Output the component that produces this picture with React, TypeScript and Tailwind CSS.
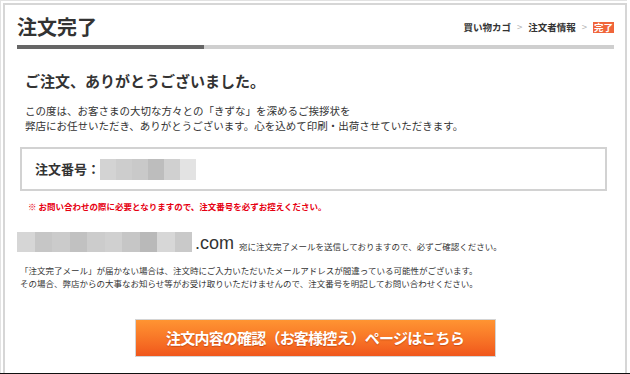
const jp = "font-['Noto_Sans_CJK_JP','Noto_Sans',sans-serif]"

// モザイク（ぼかし）部分の色
const orderBlur = ['#d3d3d3', '#cdcdcd', '#c9c9c9', '#bdbdbd', '#d0d0d0', '#e3e3e3']
const mailBlur = ['#d6d6d6', '#c6c6c6', '#cbcbcb', '#c1c1c1', '#cccccc', '#d0d0d0', '#c6c6c6', '#b9b9b9', '#d7d7d7', '#c9c9c9']

const Mosaic = ({ colors, cell, h }: { colors: string[]; cell: string; h: string }) => (
  <div className={`flex ${h}`}>
    {colors.map((c, i) => (
      <div key={i} className={cell} style={{ backgroundColor: c }} />
    ))}
  </div>
)

const Breadcrumb = () => (
  <div className={`flex items-center gap-[6px] text-[9.5px] font-bold text-[#333] ${jp}`}>
    <span>買い物カゴ</span>
    <span className="font-normal text-[#b5b5b5]">&gt;</span>
    <span>注文者情報</span>
    <span className="font-normal text-[#b5b5b5]">&gt;</span>
    <span className="bg-[#f0653a] px-[1px] leading-[11px] text-white">完了</span>
  </div>
)

export default function App() {
  return (
    <div className="flex h-[374px] w-[630px] border-b border-[#111] bg-white">
      <div className="h-full w-[627px] border-l border-t border-[#e2e2e2] pl-[2px] pt-[2px]">
        <div className={`h-full border-x-2 border-t-2 border-[#d6d6d6] ${jp} text-[#333]`}>
          {/* ヘッダー */}
          <div className="ml-[12px] mr-[11px] pt-[8px]">
            <div className="flex items-center justify-between">
              <h1 className="text-[20px] font-bold leading-[28px] text-[#333]">注文完了</h1>
              <Breadcrumb />
            </div>
            <div className="mt-[4px] flex h-[4px]">
              <div className="w-[187px] bg-[#666]" />
              <div className="flex-1 bg-[#cfcfcf]" />
            </div>
          </div>

          {/* 本文 */}
          <div className="pl-[20px]">
            <h2 className="mt-[22px] text-[15px] font-bold leading-[20px]">ご注文、ありがとうございました。</h2>
            <p className="mt-[12px] text-[10.5px] leading-[15px]">
              この度は、お客さまの大切な方々との「きずな」を深めるご挨拶状を
              <br />
              弊店にお任せいただき、ありがとうございます。心を込めて印刷・出荷させていただきます。
            </p>
          </div>

          <div className="ml-[15px] mt-[14px] flex h-[44px] w-[587px] items-center border-2 border-[#d2d2d2] pl-[13px]">
            <span className="text-[13px] font-bold">注文番号：</span>
            <Mosaic colors={orderBlur} cell="w-[16px]" h="h-[21px]" />
          </div>

          <p className="ml-[23px] mt-[9px] text-[8.5px] font-bold leading-[12px] text-[#e60012]">
            ※ お問い合わせの際に必要となりますので、注文番号を必ずお控えください。
          </p>

          <div className="ml-[12px] mt-[20px] flex items-end">
            <Mosaic colors={mailBlur} cell="w-[17.5px]" h="h-[20px]" />
            <span className="ml-[3px] font-['Liberation_Sans',sans-serif] text-[18px] leading-[17px] text-[#333]">.com</span>
            <span className="ml-[5px] text-[8.5px] leading-[12px]">
              宛に注文完了メールを送信しておりますので、必ずご確認ください。
            </span>
          </div>

          <p className="ml-[15px] mt-[12px] text-[8.5px] leading-[13px]">
            「注文完了メール」が届かない場合は、注文時にご入力いただいたメールアドレスが間違っている可能性がございます。
            <br />
            その場合、弊店からの大事なお知らせ等がお受け取りいただけませんので、注文番号を明記してお問い合わせください。
          </p>

          {/* ボタン */}
          <div className="mt-[29px] flex justify-center">
            <button className="h-[38px] w-[361px] border border-[#d4d4d4] p-0">
              <div className="flex h-full w-full items-center justify-center bg-gradient-to-b from-[#ff9432] to-[#f0561c] text-[15px] font-bold tracking-[-0.8px] text-white [text-shadow:0_1px_1px_rgba(150,40,0,0.45)]">
                注文内容の確認（お客様控え）ページはこちら
              </div>
            </button>
          </div>
        </div>
      </div>
    </div>
  )
}
